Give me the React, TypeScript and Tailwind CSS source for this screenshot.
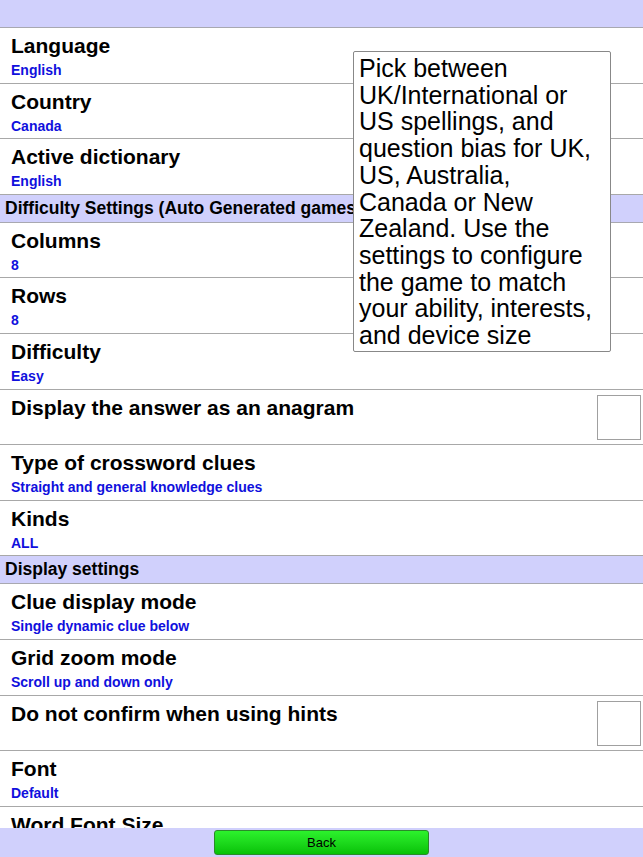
import React from "react";

type Item =
  | { kind: "row"; title: string; sub?: string; check?: boolean }
  | { kind: "header"; title: string };

const items: Item[] = [
  { kind: "row", title: "Language", sub: "English" },
  { kind: "row", title: "Country", sub: "Canada" },
  { kind: "row", title: "Active dictionary", sub: "English" },
  { kind: "header", title: "Difficulty Settings (Auto Generated games)" },
  { kind: "row", title: "Columns", sub: "8" },
  { kind: "row", title: "Rows", sub: "8" },
  { kind: "row", title: "Difficulty", sub: "Easy" },
  { kind: "row", title: "Display the answer as an anagram", check: true },
  { kind: "row", title: "Type of crossword clues", sub: "Straight and general knowledge clues" },
  { kind: "row", title: "Kinds", sub: "ALL" },
  { kind: "header", title: "Display settings" },
  { kind: "row", title: "Clue display mode", sub: "Single dynamic clue below" },
  { kind: "row", title: "Grid zoom mode", sub: "Scroll up and down only" },
  { kind: "row", title: "Do not confirm when using hints", check: true },
  { kind: "row", title: "Font", sub: "Default" },
  { kind: "row", title: "Word Font Size", sub: "Medium" },
];

export default function App() {
  return (
    <div
      className="relative w-[643px] h-[857px] overflow-hidden bg-white flex flex-col"
      style={{ fontFamily: '"Liberation Sans", Arial, sans-serif' }}
    >
      <div className="h-[28px] shrink-0 bg-[#d0d0fc] border-b border-[#a8a8b0]" />
      <div className="flex-1 overflow-hidden flex flex-col">
        {items.map((it, i) =>
          it.kind === "header" ? (
            <div
              key={i}
              className="h-[28px] shrink-0 bg-[#d0d0fc] border-b border-[#a8a8b0] flex items-center px-[5px] text-[17.5px] leading-none font-bold text-black whitespace-nowrap overflow-hidden"
            >
              {it.title}
            </div>
          ) : (
            <div
              key={i}
              className="h-[55.6px] shrink-0 border-b border-[#a8a8a8] flex items-start justify-between pl-[11px] pr-[2px]"
            >
              <div className="flex flex-col pt-[6px]">
                <div className="text-[21px] leading-[24px] font-bold text-black whitespace-nowrap">{it.title}</div>
                {it.sub && (
                  <div className="text-[14px] leading-[16px] font-bold text-[#1010dd] mt-[4px] whitespace-nowrap">
                    {it.sub}
                  </div>
                )}
              </div>
              {it.check && (
                <div className="mt-[5px] w-[44px] h-[45px] border border-[#a0a0a0] bg-white" />
              )}
            </div>
          )
        )}
      </div>
      <div className="h-[29px] shrink-0 bg-[#d0d0fc] flex items-center justify-center">
        <button className="w-[215px] h-[25px] rounded-[3px] border border-[#2a8a2a] bg-gradient-to-b from-[#2cf22c] to-[#06c206] text-[13px] text-black flex items-center justify-center">
          Back
        </button>
      </div>
      <div className="absolute left-[353px] top-[51px] w-[258px] h-[301px] bg-white border border-[#888888] rounded-[2px] pl-[5px] pr-[15px] pt-[3px] text-[25px] leading-[26.7px] text-black">
        Pick between UK/International or US spellings, and question bias for UK, US, Australia, Canada or New Zealand. Use the settings to configure the game to match your ability, interests, and device size
      </div>
    </div>
  );
}
